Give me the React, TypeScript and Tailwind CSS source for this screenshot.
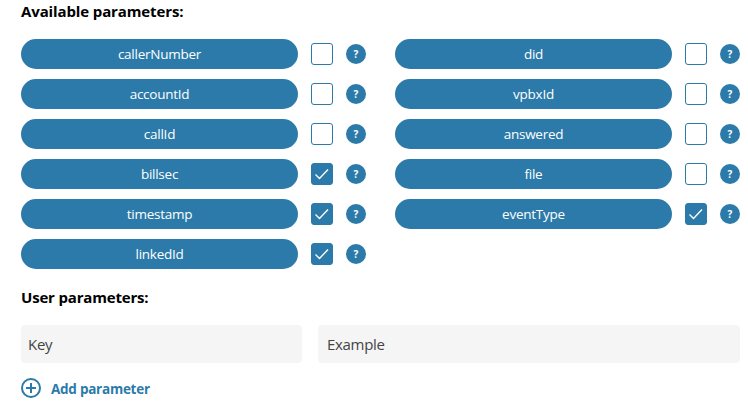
import React from 'react';

const FONT = "font-['Open_Sans','Noto_Sans',sans-serif]";

const left = [
  { name: 'callerNumber', on: false },
  { name: 'accountId', on: false },
  { name: 'callId', on: false },
  { name: 'billsec', on: true },
  { name: 'timestamp', on: true },
  { name: 'linkedId', on: true },
];

const right = [
  { name: 'did', on: false },
  { name: 'vpbxId', on: false },
  { name: 'answered', on: false },
  { name: 'file', on: false },
  { name: 'eventType', on: true },
];

const Param = ({ name, on }: { name: string; on: boolean }) => (
  <div className="flex items-center h-[30px]">
    <div className="w-[277px] h-[30px] rounded-[15px] bg-[#2b7aa9] text-white text-[13.5px] tracking-[-0.25px] flex items-center justify-center">
      {name}
    </div>
    <div
      className={`ml-[13px] w-[22px] h-[22px] rounded-[3px] border border-[#2b7aa9] flex items-center justify-center ${
        on ? 'bg-[#2b7aa9]' : 'bg-white'
      }`}
    >
      {on && (
        <svg width="16" height="12" viewBox="0 0 16 12" fill="none">
          <path d="M1.5 6.5 L5.5 10.5 L14 1.5" stroke="white" strokeWidth="1.4" />
        </svg>
      )}
    </div>
    <div className="ml-[13px] w-[20px] h-[20px] rounded-full bg-[#2b7aa9] text-white text-[10px] font-bold flex items-center justify-center">
      ?
    </div>
  </div>
);

const App = () => {
  return (
    <div className={`w-[748px] h-[406px] bg-white overflow-hidden pl-[21px] pr-[8px] text-black ${FONT}`}>
      <h3 className="text-[15px] font-bold leading-[22px] tracking-[-0.12px]">Available parameters:</h3>

      <div className="flex gap-[29px] mt-[17px]">
        <div className="flex flex-col gap-[10px]">
          {left.map((p) => (
            <Param key={p.name} name={p.name} on={p.on} />
          ))}
        </div>
        <div className="flex flex-col gap-[10px]">
          {right.map((p) => (
            <Param key={p.name} name={p.name} on={p.on} />
          ))}
        </div>
      </div>

      <h3 className="text-[15px] font-bold leading-[22px] tracking-[-0.18px] mt-[17px]">User parameters:</h3>

      <div className="flex gap-[16px] mt-[17px]">
        <div className="w-[281px] h-[38px] rounded-[4px] bg-[#f5f5f5] px-[7px] flex items-center text-[15px] tracking-[-0.3px] text-[#444]">
          Key
        </div>
        <div className="w-[422px] h-[38px] rounded-[4px] bg-[#f5f5f5] px-[9px] flex items-center text-[15px] tracking-[-0.3px] text-[#444]">
          Example
        </div>
      </div>

      <div className="flex items-center mt-[14px] gap-[10px]">
        <svg width="20" height="20" viewBox="0 0 20 20" fill="none" stroke="#2b7aa9" strokeWidth="2">
          <circle cx="10" cy="10" r="9" />
          <path d="M10 5 V15 M5 10 H15" />
        </svg>
        <span className="pt-[2px] text-[13.5px] font-bold tracking-[-0.25px] text-[#2b7aa9]">Add parameter</span>
      </div>
    </div>
  );
};

export default App;
